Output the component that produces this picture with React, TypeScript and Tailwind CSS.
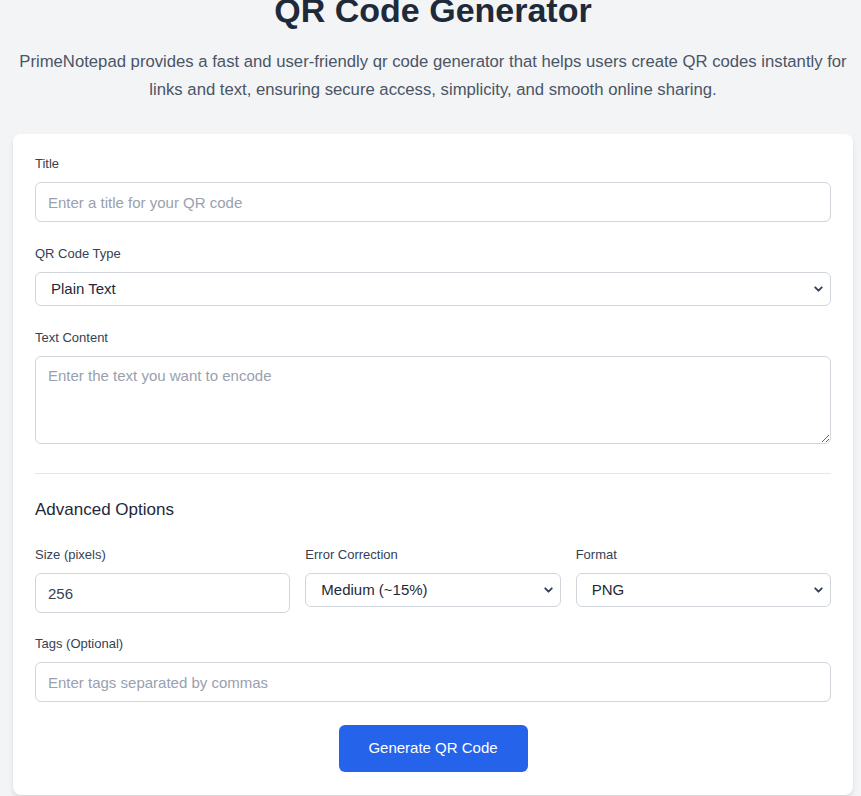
import { ChevronDown } from 'lucide-react'

function Label({ children }: { children: React.ReactNode }) {
  return <label className="block text-[13px] leading-5 text-gray-700 mb-2">{children}</label>
}

function Select({ value, options }: { value: string; options: string[] }) {
  return (
    <div className="relative">
      <select
        defaultValue={value}
        className="w-full h-[34px] appearance-none rounded-md border border-gray-300 bg-white pl-[15px] pr-8 text-[15px] text-gray-800 outline-none"
      >
        {options.map((o) => (
          <option key={o}>{o}</option>
        ))}
      </select>
      <ChevronDown
        size={13}
        strokeWidth={3.5}
        className="pointer-events-none absolute right-[6px] top-1/2 -translate-y-1/2 text-gray-700"
      />
    </div>
  )
}

export default function App() {
  return (
    <div className="min-h-screen bg-[#f3f4f6] font-['Liberation_Sans',Arial,sans-serif] overflow-hidden">
      <div className="pl-[13px] pr-[8px] pb-10">
        <h1 className="-mt-[10px] text-center text-[34px] leading-10 font-bold text-gray-800">
          QR Code Generator
        </h1>
        <p className="mt-[18px] text-center text-[16.7px] leading-7 text-gray-600">
          PrimeNotepad provides a fast and user-friendly qr code generator that helps users create QR codes instantly for
          links and text, ensuring secure access, simplicity, and smooth online sharing.
        </p>

        <div className="mt-[30px] rounded-lg bg-white px-[22px] pt-5 pb-[23px] shadow-md">
          <div>
            <Label>Title</Label>
            <input
              className="w-full h-10 rounded-md border border-gray-300 px-3 text-[15px] text-gray-700 placeholder:text-gray-400 outline-none"
              placeholder="Enter a title for your QR code"
            />
          </div>

          <div className="mt-[22px]">
            <Label>QR Code Type</Label>
            <Select value="Plain Text" options={['Plain Text', 'URL', 'Email', 'Phone']} />
          </div>

          <div className="mt-[22px]">
            <Label>Text Content</Label>
            <textarea
              className="block w-full h-[88px] rounded-md border border-gray-300 px-3 py-[8px] text-[15px] text-gray-700 placeholder:text-gray-400 outline-none"
              placeholder="Enter the text you want to encode"
            />
          </div>

          <div className="mt-[29px] border-t border-gray-200 pt-6">
            <h3 className="text-[17px] leading-6 text-gray-800">Advanced Options</h3>

            <div className="mt-[23px] grid grid-cols-3 gap-[15px] items-start">
              <div>
                <Label>Size (pixels)</Label>
                <input
                  defaultValue="256"
                  className="w-full h-10 rounded-md border border-gray-300 px-3 text-[15px] text-gray-700 outline-none"
                />
              </div>
              <div>
                <Label>Error Correction</Label>
                <Select
                  value="Medium (~15%)"
                  options={['Low (~7%)', 'Medium (~15%)', 'Quartile (~25%)', 'High (~30%)']}
                />
              </div>
              <div>
                <Label>Format</Label>
                <Select value="PNG" options={['PNG', 'SVG', 'JPEG']} />
              </div>
            </div>

            <div className="mt-[21px]">
              <Label>Tags (Optional)</Label>
              <input
                className="w-full h-10 rounded-md border border-gray-300 px-3 text-[15px] text-gray-700 placeholder:text-gray-400 outline-none"
                placeholder="Enter tags separated by commas"
              />
            </div>
          </div>

          <div className="mt-[23px] flex justify-center">
            <button className="h-[47px] w-[189px] rounded-md bg-[#2563eb] text-[15px] text-white">
              Generate QR Code
            </button>
          </div>
        </div>
      </div>
    </div>
  )
}
